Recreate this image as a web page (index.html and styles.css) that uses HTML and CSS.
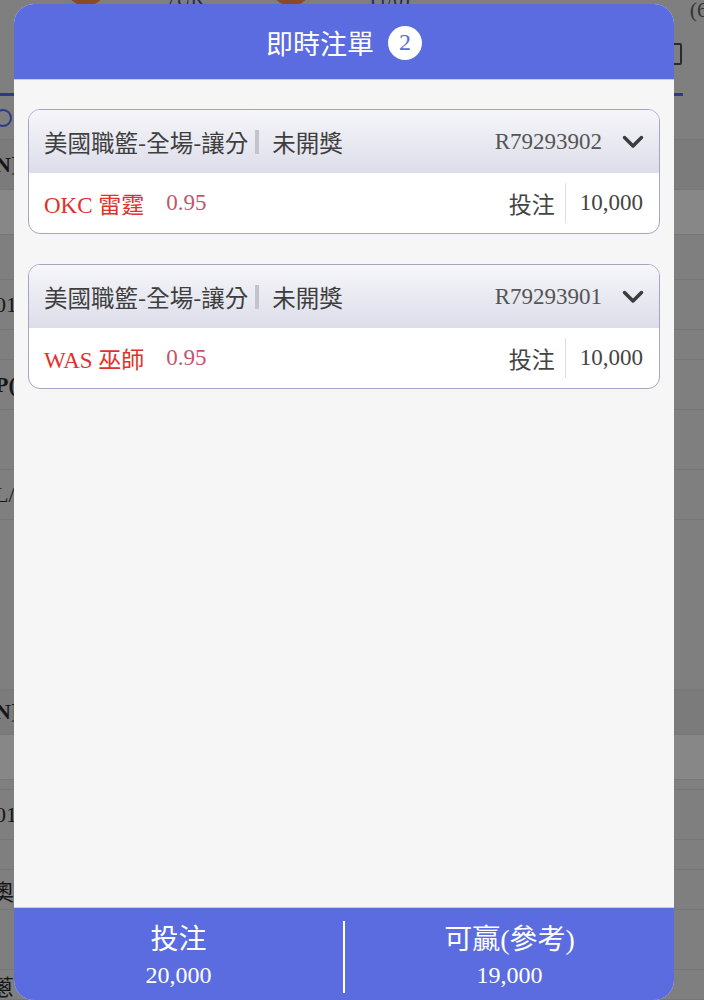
FILE: index.html
```html
<!DOCTYPE html>
<html>
  <head>
    <title>即時注單</title>
    <meta name="viewport" content="width=device-width, user-scalable=no">
    <link rel="stylesheet" href="styles.css">
  </head>
<body>

<!-- page behind the dialog (dimmed) -->
<div class="page">
  <div class="bg-top">
    <span class="bg-avatar"></span><span class="bg-name">7UK</span>
    <span class="bg-avatar"></span><span class="bg-name">(1/0)</span>
    <span class="bg-right">
      <span class="bg-count">(6</span>
      <span class="bg-box"></span>
    </span>
  </div>
  <div class="bg-tabline"></div>
  <div class="bg-row r44"><span class="bg-clock"></span></div>
  <div class="bg-row r50 shade"><span class="bg-txt bold">N]</span></div>
  <div class="bg-row r45 light"></div>
  <div class="bg-row r45"></div>
  <div class="bg-row r50"><span class="bg-txt">01</span></div>
  <div class="bg-row r30"></div>
  <div class="bg-row r50"><span class="bg-txt bold">P(</span></div>
  <div class="bg-row r60"></div>
  <div class="bg-row r50"><span class="bg-txt">L/</span></div>
  <div class="bg-row r170"></div>
  <div class="bg-row r45 shade"><span class="bg-txt bold">N]</span></div>
  <div class="bg-row r45 light"></div>
  <div class="bg-row r10"></div>
  <div class="bg-row r50"><span class="bg-txt">01</span></div>
  <div class="bg-row r30"></div>
  <div class="bg-row r40"><span class="bg-txt cjk">奧</span></div>
  <div class="bg-row r60"></div>
  <div class="bg-row r30"><span class="bg-txt cjk">蔥</span></div>
</div>

<div class="modal">
  <div class="modal-head">
    <span class="title">即時注單</span>
    <span class="badge">2</span>
  </div>

  <div class="bet-list">
    <div class="bet-card">
      <div class="bet-head">
        <span class="bet-type">美國職籃-全場-讓分</span><span class="sep"></span><span class="bet-status">未開獎</span>
        <span class="bet-id">R79293902</span>
        <svg class="chev" width="22" height="14" viewBox="0 0 22 14"><polyline points="2.5,2.5 11,11 19.5,2.5" /></svg>
      </div>
      <div class="bet-body">
        <span class="pick"><span class="latin">OKC</span> 雷霆</span>
        <span class="odds">0.95</span>
        <span class="stake-label">投注</span>
        <span class="stake">10,000</span>
      </div>
    </div>

    <div class="bet-card">
      <div class="bet-head">
        <span class="bet-type">美國職籃-全場-讓分</span><span class="sep"></span><span class="bet-status">未開獎</span>
        <span class="bet-id">R79293901</span>
        <svg class="chev" width="22" height="14" viewBox="0 0 22 14"><polyline points="2.5,2.5 11,11 19.5,2.5" /></svg>
      </div>
      <div class="bet-body">
        <span class="pick"><span class="latin">WAS</span> 巫師</span>
        <span class="odds">0.95</span>
        <span class="stake-label">投注</span>
        <span class="stake">10,000</span>
      </div>
    </div>
  </div>

  <div class="modal-foot">
    <div class="sum">
      <div class="sum-label">投注</div>
      <div class="sum-value">20,000</div>
    </div>
    <div class="divider"></div>
    <div class="sum">
      <div class="sum-label">可贏(參考)</div>
      <div class="sum-value">19,000</div>
    </div>
  </div>
</div>

</body>
</html>
```

FILE: styles.css
```css
* {box-sizing: border-box}
html {
  margin: 0; padding: 0;
}
body {
  margin: 0; padding: 0; overflow: hidden;
  height: 1000px;
  position: relative;
  background: #7f7f7f;
  font-family: "Liberation Serif", "Noto Sans CJK TC", serif;
}

/* dimmed page behind */
.page {
  color: #161616;
}
.bg-top {
  height: 93px;
  display: flex;
  align-items: flex-start;
}
.bg-avatar {
  width: 40px;
  height: 40px;
  border-radius: 50%;
  background: #8a4a26;
  margin: -34px 0 0 66px;
}
.bg-name {
  color: #1e2a66;
  font-size: 20px;
  margin: -12px 0 0 60px;
}
.bg-right {
  margin-left: auto;
  margin-right: -4px;
  display: flex;
  flex-direction: column;
  align-items: flex-end;
}
.bg-count {
  margin-top: -3px;
  font-size: 22px;
  color: #333;
}
.bg-box {
  width: 22px;
  height: 22px;
  border: 2px solid #2a2a2a;
  border-radius: 2px;
  margin: 20px 26px 0 0;
}
.bg-tabline {
  height: 3px;
  background: #2b3a86;
  margin-right: 21px;
}
.bg-row {
  display: flex;
  align-items: center;
  border-bottom: 1px solid #777;
}
.r10 { height: 10px; }
.r30 { height: 30px; }
.r40 { height: 40px; }
.r44 { height: 44px; }
.r45 { height: 45px; }
.r50 { height: 50px; }
.r60 { height: 60px; }
.r170 { height: 170px; }
.shade { background: #7b7b7b; }
.light { background: #878787; }
.bg-txt {
  font-size: 22px;
  margin-left: -5px;
}
.bg-txt.bold { font-weight: bold; }
.bg-txt.cjk { font-family: "Noto Sans CJK TC", sans-serif; margin-left: -8px; }
.bg-clock {
  width: 18px;
  height: 18px;
  border: 2px solid #2b3a86;
  border-radius: 50%;
  margin-left: -6px;
}

/* dialog */
.modal {
  position: absolute;
  left: 14px;
  top: 4px;
  width: 660px;
  height: 996px;
  border-radius: 20px;
  overflow: hidden;
  display: flex;
  flex-direction: column;
  background: #f6f6f6;
}
.modal-head {
  height: 76px;
  flex: none;
  background: #5b6ce0;
  border-bottom: 1px solid #c3cbf2;
  display: flex;
  align-items: center;
  justify-content: center;
  gap: 14px;
  padding-top: 2px;
}
.title {
  color: #fff;
  font-family: "Noto Sans CJK TC", sans-serif;
  font-size: 27px;
}
.badge {
  width: 34px;
  height: 34px;
  border-radius: 50%;
  background: #fff;
  color: #5b6ce0;
  font-size: 24px;
  display: flex;
  align-items: center;
  justify-content: center;
}

.bet-list {
  flex: 1;
  padding: 29px 14px 0;
  display: flex;
  flex-direction: column;
  gap: 30px;
}
.bet-card {
  border: 1.5px solid #a2a6c4;
  border-radius: 12px;
  overflow: hidden;
  background: #fff;
}
.bet-head {
  height: 63px;
  display: flex;
  align-items: center;
  padding: 0 15px;
  background: linear-gradient(#f6f6fa, #dcdde9);
  font-size: 23.5px;
  color: #3e3e3e;
}
.bet-type, .bet-status {
  font-family: "Noto Sans CJK TC", sans-serif;
}
.sep {
  width: 4px;
  height: 24px;
  background: #c3c3cb;
  margin: 0 13px 0 7px;
}
.bet-id {
  margin-left: auto;
  color: #555;
  font-size: 23px;
}
.chev {
  margin-left: 20px;
  fill: none;
  stroke: #3c3c3c;
  stroke-width: 3.5;
  stroke-linecap: round;
  stroke-linejoin: round;
}
.bet-body {
  height: 60px;
  display: flex;
  align-items: center;
  padding: 0 16px 1px 15px;
  font-size: 23px;
}
.pick {
  color: #e2302a;
}
.latin {
  font-family: "Liberation Serif", serif;
}
.odds {
  color: #c2566b;
  margin-left: 22px;
}
.stake-label {
  margin-left: auto;
  color: #444;
  font-family: "Noto Sans CJK TC", sans-serif;
}
.stake {
  margin-left: 10px;
  padding-left: 14px;
  height: 40px;
  display: flex;
  align-items: center;
  border-left: 1px solid #dedede;
  color: #444;
}

.modal-foot {
  height: 93px;
  flex: none;
  background: #5b6ce0;
  border-top: 1px solid #c3cbf2;
  display: flex;
  align-items: center;
  padding-top: 6px;
  color: #fff;
}
.sum {
  flex: 1;
  text-align: center;
}
.sum-label {
  font-size: 28px;
  line-height: 36px;
}
.sum-value {
  font-size: 24px;
  line-height: 34px;
}
.divider {
  width: 2px;
  height: 72px;
  background: #fff;
}
```
